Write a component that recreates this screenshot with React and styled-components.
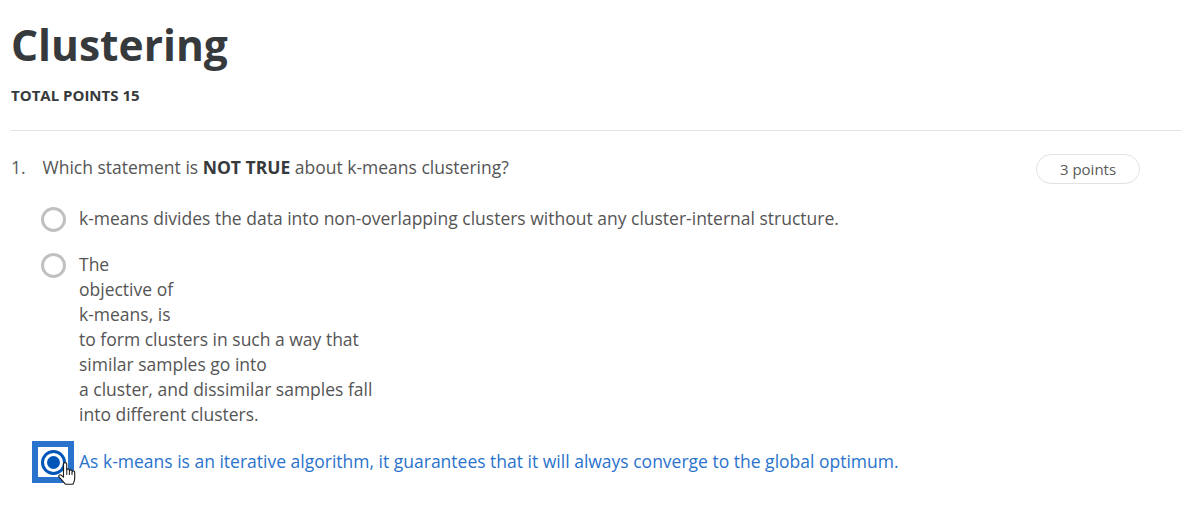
import React from 'react';
import styled, { createGlobalStyle } from 'styled-components';

const Global = createGlobalStyle`
  html, body {
    margin: 0;
    background: #fff;
    font-family: 'Open Sans', 'DejaVu Sans', sans-serif;
    color: #373a3c;
  }
`;

const Page = styled.div`
  width: 1203px;
  height: 511px;
  padding: 18px 22px 0 11px;
  box-sizing: border-box;
  overflow: hidden;
`;

const Heading = styled.h1`
  margin: 0;
  font-size: 42.5px;
  line-height: 53px;
  font-weight: 700;
  color: #373a3c;
`;

const TotalPoints = styled.div`
  margin-top: 14px;
  font-size: 15px;
  line-height: 20px;
  font-weight: 700;
  color: #373a3c;
`;

const Divider = styled.hr`
  margin: 25px 0 0;
  border: 0;
  border-top: 1px solid #e1e1e1;
`;

const Question = styled.div`
  display: flex;
  align-items: flex-start;
  padding-top: 23px;
`;

const Number = styled.div`
  width: 31.5px;
  font-size: 17.5px;
  line-height: 26px;
  color: #5a5a5a;
`;

const Prompt = styled.div`
  flex: 1;
  font-size: 17.5px;
  line-height: 26px;
  color: #555;

  strong {
    font-weight: 700;
    color: #373a3c;
  }
`;

const PointsPill = styled.div`
  width: 104px;
  height: 30px;
  margin: 0 41px 0 0;
  border: 1px solid #e1e1e1;
  border-radius: 15px;
  box-sizing: border-box;
  display: flex;
  align-items: center;
  justify-content: center;
  font-size: 15px;
  color: #5a5a5a;
`;

const Options = styled.div`
  display: flex;
  flex-direction: column;
  padding: 22px 0 0 21px;
`;

const Option = styled.div`
  display: flex;
  align-items: flex-start;
  margin-bottom: ${(p) => p.$gap}px;
`;

const RadioSlot = styled.div`
  width: 42px;
  height: 26px;
  margin-right: 5px;
  padding-top: 1px;
  box-sizing: border-box;
  display: flex;
  justify-content: center;
`;

const FocusBox = styled.div`
  position: relative;
  width: 42px;
  height: 42px;
  margin: -8px 5px 0 0;
  border: 6px solid #2a73cc;
  background: #fff;
  box-sizing: border-box;
  display: flex;
  align-items: center;
  justify-content: center;
`;

const Circle = styled.span`
  width: 25px;
  height: 25px;
  border-radius: 50%;
  box-sizing: border-box;
  border: 3px solid ${(p) => (p.$checked ? '#0056b8' : '#c0c0c0')};
  display: flex;
  align-items: center;
  justify-content: center;
  background: #fff;

  &::after {
    content: '';
    display: ${(p) => (p.$checked ? 'block' : 'none')};
    width: 13px;
    height: 13px;
    border-radius: 50%;
    background: #0056b8;
  }
`;

const Label = styled.div`
  font-size: 17.5px;
  line-height: 25px;
  color: ${(p) => (p.$active ? '#2a73cc' : '#555')};
  white-space: pre-line;
`;

const Cursor = styled.svg`
  position: absolute;
  left: 20px;
  top: 15px;
  width: 19px;
  height: 24px;
`;

const HandCursor = () => (
  <Cursor viewBox="0 0 19 24">
    <path
      d="M5.5 2c0-1.9 3.2-1.9 3.2 0v6c0-1.5 2.7-1.5 2.7 0v1c0-1.5 2.7-1.5 2.7 0v1c0-1.4 2.6-1.4 2.6 0.2v6.3c0 2.6-.8 4-1.8 5.8H7.6C6 20.6 3.6 18 1.2 15.2c-1.2-1.6.8-3.2 2.2-1.9l2.1 1.9z"
      fill="#fff"
      stroke="#1b1b1b"
      strokeWidth="1.1"
      strokeLinejoin="round"
    />
    <path d="M8.8 8v5M11.4 9v4M14 10v3" stroke="#1b1b1b" strokeWidth="1" fill="none" />
  </Cursor>
);

export default function App() {
  return (
    <Page>
      <Global />
      <Heading>Clustering</Heading>
      <TotalPoints>TOTAL POINTS 15</TotalPoints>
      <Divider />
      <Question>
        <Number>1.</Number>
        <Prompt>
          Which statement is <strong>NOT TRUE</strong> about k-means clustering?
        </Prompt>
        <PointsPill>3 points</PointsPill>
      </Question>
      <Options>
        <Option $gap={20}>
          <RadioSlot>
            <Circle />
          </RadioSlot>
          <Label>k-means divides the data into non-overlapping clusters without any cluster-internal structure.</Label>
        </Option>
        <Option $gap={22}>
          <RadioSlot>
            <Circle />
          </RadioSlot>
          <Label>
            {'The\nobjective of\nk-means, is\nto form clusters in such a way that\nsimilar samples go into\na cluster, and dissimilar samples fall\ninto different clusters.'}
          </Label>
        </Option>
        <Option $gap={0}>
          <FocusBox>
            <Circle $checked />
            <HandCursor />
          </FocusBox>
          <Label $active>As k-means is an iterative algorithm, it guarantees that it will always converge to the global optimum.</Label>
        </Option>
      </Options>
    </Page>
  );
}
